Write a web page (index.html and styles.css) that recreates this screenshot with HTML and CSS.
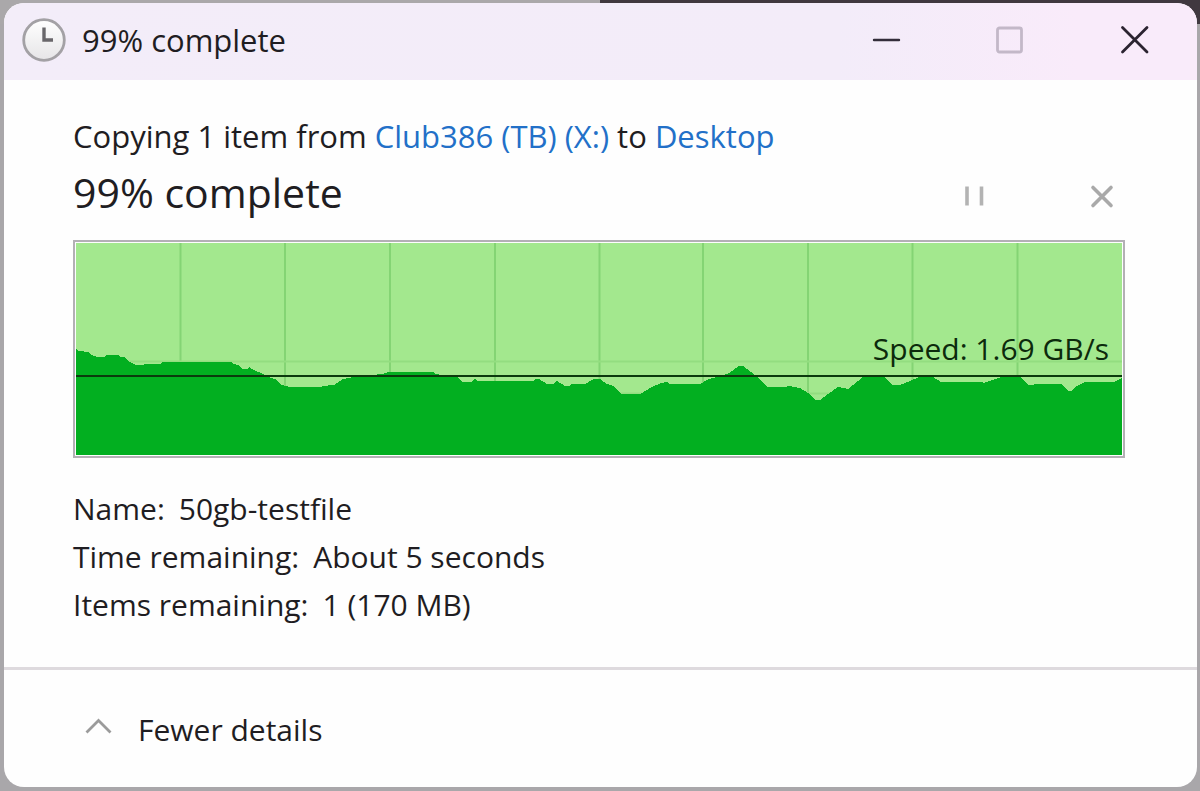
FILE: index.html
```html
<!DOCTYPE html>
<html lang="en">
<head>
  <meta charset="utf-8">
  <title>99% complete</title>
  <link rel="stylesheet" href="styles.css">
</head>
<body>
  <div class="window">
    <!-- Title bar -->
    <header class="title-bar">
      <svg class="clock" viewBox="0 0 44 44" aria-hidden="true">
        <defs>
          <linearGradient id="clock-face" x1="0" y1="0" x2="0" y2="1">
            <stop offset="0" stop-color="#ffffff"/>
            <stop offset="1" stop-color="#e6e5e7"/>
          </linearGradient>
        </defs>
        <circle cx="22" cy="22" r="20.3" fill="url(#clock-face)" stroke="#a3a1a5" stroke-width="2.8"/>
        <path d="M22 9.5V22h9" fill="none" stroke="#69676b" stroke-width="3.4"/>
      </svg>
      <span class="window-title">99% complete</span>
      <div class="window-buttons">
        <button class="window-btn" type="button" aria-label="Minimize">
          <svg width="30" height="30" viewBox="0 0 30 30"><path d="M2 15h25" stroke="#332d3a" stroke-width="2.4" stroke-linecap="round"/></svg>
        </button>
        <button class="window-btn" type="button" aria-label="Maximize" disabled>
          <svg width="30" height="30" viewBox="0 0 30 30"><rect x="1.500" y="3" width="24" height="24" rx="2" fill="none" stroke="#c3b8c8" stroke-width="2.800"/></svg>
        </button>
        <button class="window-btn" type="button" aria-label="Close">
          <svg width="30" height="30" viewBox="0 0 30 30"><path d="M2.500 2.500l24.500 24.500M27 2.500l-24.500 24.500" stroke="#2b2330" stroke-width="2.800" stroke-linecap="round"/></svg>
        </button>
      </div>
    </header>

    <main class="content">
      <p class="summary">Copying 1 item from <a href="#">Club386 (TB) (X:)</a> to <a href="#">Desktop</a></p>

      <div class="status">
        <h1>99% complete</h1>
        <div class="status-buttons">
          <button class="status-btn" type="button" aria-label="Pause">
            <svg width="26" height="26" viewBox="0 0 26 26"><path d="M6 3.500v19M20.500 3.500v19" stroke="#b3b3b3" stroke-width="3.600"/></svg>
          </button>
          <button class="status-btn" type="button" aria-label="Cancel">
            <svg width="26" height="26" viewBox="0 0 26 26"><path d="M4 4.500l18 18M22 4.500l-18 18" stroke="#a9a9a9" stroke-width="3.600" stroke-linecap="round"/></svg>
          </button>
        </div>
      </div>

      <!-- Transfer speed graph -->
      <div class="graph">
        <svg class="plot" viewBox="0 0 1046 212" preserveAspectRatio="none" aria-hidden="true">
          <rect width="1046" height="212" fill="#a3e88e"/>
          <path class="grid" d="M104.500 0v212M209 0v212M314 0v212M419 0v212M523.500 0v212M627 0v212M732 0v212M836.500 0v212M941.500 0v212"/>
          <path class="grid grid-faint" d="M0 118.500h1046M0 150.500h1046"/>
          <polygon fill="#02af20" shape-rendering="crispEdges" points="0,212 0,106 3,108 12,109 16,112 21,114 29,114 30,112 43,112 44,114 48,114 51,117 56,120 60,122 67,122 69,121 85,121 86,119 156,119 157,121 162,122 166,126 171,126 173,124 176,126 187,131 192,134 199,136 205,142 211,143 212,144 245,144 246,143 258,142 267,136 277,134 306,131 312,129 358,129 359,131 381,134 387,139 395,139 399,136 401,138 457,138 459,136 463,136 471,141 477,141 481,138 489,143 494,143 495,141 509,141 518,136 524,136 531,141 537,143 546,151 564,151 576,144 585,140 591,139 593,141 624,141 633,136 641,134 653,130 663,123 667,123 679,132 691,144 709,144 713,143 724,145 732,150 740,157 744,157 759,146 762,144 772,146 787,134 809,134 816,142 824,142 834,138 843,134 857,134 865,139 906,139 908,140 919,136 926,134 944,134 953,142 957,142 959,141 985,141 992,148 996,148 999,144 1009,139 1038,139 1046,135 1046,212"/>
          <rect y="132" width="1046" height="2" fill="#0b3a0d"/>
        </svg>
        <span class="speed">Speed: 1.69 GB/s</span>
      </div>

      <dl class="details">
        <div><dt>Name:</dt><dd>50gb-testfile</dd></div>
        <div><dt>Time remaining:</dt><dd>About 5 seconds</dd></div>
        <div><dt>Items remaining:</dt><dd>1 (170 MB)</dd></div>
      </dl>
    </main>

    <footer class="footer">
      <button class="details-btn" type="button">
        <svg width="30" height="28" viewBox="0 0 30 28" aria-hidden="true"><path d="M2.500 16.500L14.500 4.500l12 12" fill="none" stroke="#9b9b9b" stroke-width="2.800"/></svg>
        Fewer details
      </button>
    </footer>
  </div>
</body>
</html>
```

FILE: styles.css
```css
* {
  box-sizing: border-box;
}

body {
  display: flex;
  min-height: 100vh;
  margin: 0;
  padding: 3px 3px 4px 4px;
  background:
    linear-gradient(90deg, #aaa8aa 50%, #40383f 50%) top / 100% 24px no-repeat,
    #a9a7aa;
  font-family: "Open Sans", "Noto Sans", sans-serif;
  font-size: 30px;
  line-height: 48px;
  color: #1f1d22;
}

button {
  padding: 0;
  border: none;
  background: none;
  font: inherit;
  color: inherit;
}

svg {
  display: block;
}

.window {
  display: flex;
  flex: 1;
  flex-direction: column;
  overflow: hidden;
  border-radius: 20px;
  background-color: #fefefe;
}

/* Title bar */
.title-bar {
  display: flex;
  align-items: center;
  height: 77px;
  padding: 0 0 4px 18px;
  background: linear-gradient(90deg, #f3edf9 0%, #f3ecf9 70%, #f9ebfa 90%);
}

.clock {
  width: 44px;
  height: 44px;
}

.window-title {
  margin-left: 16px;
  font-size: 31px;
}

.window-buttons {
  display: flex;
  margin-left: auto;
}

.window-btn {
  display: flex;
  align-items: center;
  justify-content: center;
  width: 124px;
  height: 73px;
}

/* Content */
.content {
  flex: 1;
  padding: 32px 72px 36px 69px;
}

.summary {
  margin: 0;
  font-size: 31px;
}

.summary a {
  color: #2270c8;
  text-decoration: none;
}

.status {
  display: flex;
  align-items: center;
  justify-content: space-between;
  height: 64px;
}

h1 {
  margin: 0;
  font-size: 41px;
  font-weight: 400;
}

.status-buttons {
  display: flex;
  gap: 102px;
  padding: 8px 10px 0 0;
}

.graph {
  position: relative;
  height: 218px;
  margin-top: 16px;
  padding: 1px;
  border: 2px solid #b3b0b5;
}

.plot {
  width: 100%;
  height: 100%;
}

.grid {
  fill: none;
  stroke: #84d474;
  stroke-width: 2;
}

.grid-faint {
  stroke: #93dd80;
}

.speed {
  position: absolute;
  top: 83px;
  right: 14px;
  color: #0c2a0c;
}

.details {
  margin: 27px 0 0;
}

.details div {
  display: flex;
  gap: 14px;
}

.details dd {
  margin: 0;
}

/* Footer */
.footer {
  padding: 36px 80px 33px;
  border-top: 3px solid #dedade;
}

.details-btn {
  display: flex;
  align-items: center;
  gap: 24px;
}
```
